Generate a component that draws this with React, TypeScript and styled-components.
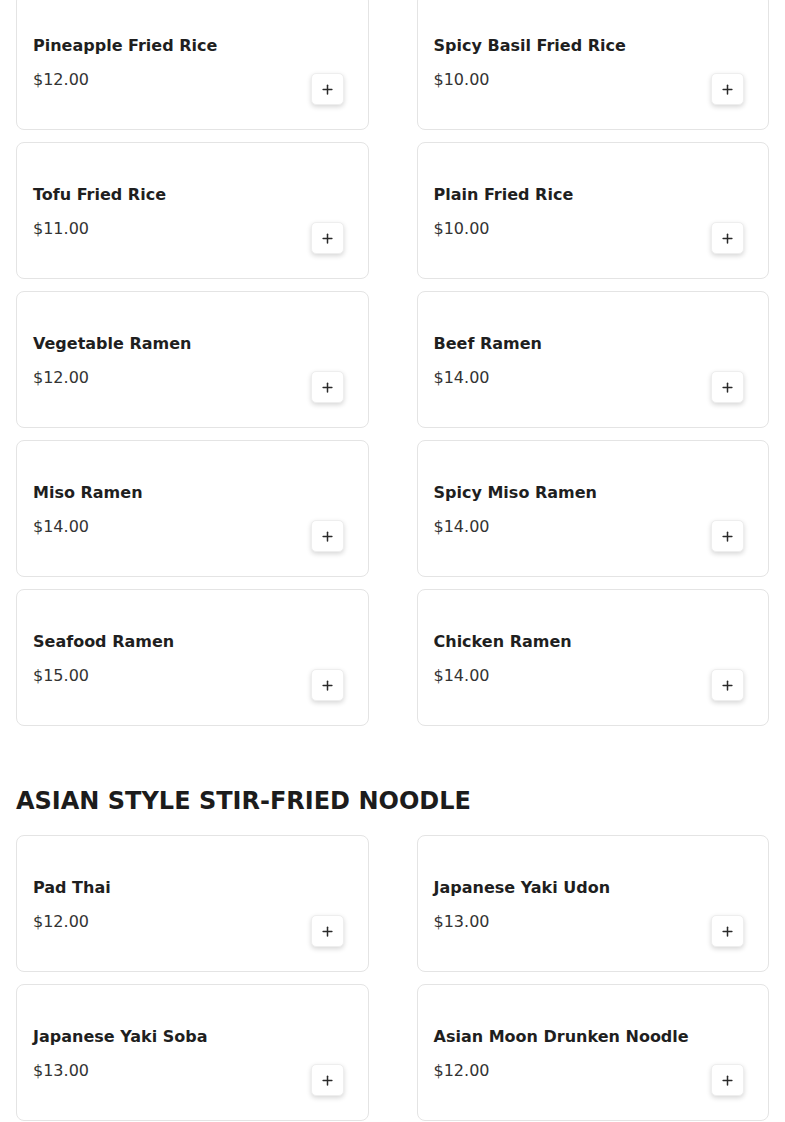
import React from 'react';
import styled, { createGlobalStyle } from 'styled-components';
import { Plus } from 'lucide-react';

const GlobalStyle = createGlobalStyle`
  body {
    margin: 0;
    background: #ffffff;
    font-family: "DejaVu Sans", "Liberation Sans", sans-serif;
    color: #1f1f1f;
  }
`;

const Page = styled.div`
  margin-top: -7px;
  padding: 0 16px;
  display: flex;
  flex-direction: column;
  gap: 59px;
`;

const Section = styled.section`
  display: flex;
  flex-direction: column;
`;

const SectionTitle = styled.h2`
  margin: 0 0 18px;
  font-size: 24px;
  line-height: 32px;
  font-weight: 700;
  color: #1c1c1c;
`;

const Grid = styled.div`
  display: grid;
  grid-template-columns: 1fr 1fr;
  column-gap: 48px;
  row-gap: 12px;
`;

const Card = styled.div`
  box-sizing: border-box;
  height: 137px;
  border: 1px solid #e4e4e4;
  border-radius: 8px;
  background: #fff;
  padding: 40px 24px 24px 16px;
  display: flex;
  justify-content: space-between;
`;

const Info = styled.div`
  display: flex;
  flex-direction: column;
  gap: 10px;
`;

const Name = styled.div`
  font-size: 16px;
  line-height: 24px;
  font-weight: 700;
  color: #1f1f1f;
`;

const Price = styled.div`
  font-size: 16px;
  line-height: 24px;
  color: #333;
`;

const AddButton = styled.button`
  align-self: flex-end;
  box-sizing: border-box;
  width: 33px;
  height: 32px;
  padding: 0;
  border: 1px solid #eeeeee;
  border-radius: 5px;
  background: #fff;
  box-shadow: 0 2px 5px rgba(0, 0, 0, 0.16);
  display: flex;
  align-items: center;
  justify-content: center;
  color: #2a2a2a;
  cursor: pointer;
`;

interface Item {
  name: string;
  price: string;
}

const riceAndRamen: Item[] = [
  { name: 'Pineapple Fried Rice', price: '$12.00' },
  { name: 'Spicy Basil Fried Rice', price: '$10.00' },
  { name: 'Tofu Fried Rice', price: '$11.00' },
  { name: 'Plain Fried Rice', price: '$10.00' },
  { name: 'Vegetable Ramen', price: '$12.00' },
  { name: 'Beef Ramen', price: '$14.00' },
  { name: 'Miso Ramen', price: '$14.00' },
  { name: 'Spicy Miso Ramen', price: '$14.00' },
  { name: 'Seafood Ramen', price: '$15.00' },
  { name: 'Chicken Ramen', price: '$14.00' },
];

const noodles: Item[] = [
  { name: 'Pad Thai', price: '$12.00' },
  { name: 'Japanese Yaki Udon', price: '$13.00' },
  { name: 'Japanese Yaki Soba', price: '$13.00' },
  { name: 'Asian Moon Drunken Noodle', price: '$12.00' },
];

const MenuCard = ({ name, price }: Item) => (
  <Card>
    <Info>
      <Name>{name}</Name>
      <Price>{price}</Price>
    </Info>
    <AddButton aria-label={`Add ${name}`}>
      <Plus size={15} strokeWidth={2.4} />
    </AddButton>
  </Card>
);

export default function App() {
  return (
    <>
      <GlobalStyle />
      <Page>
        <Section>
          <Grid>
            {riceAndRamen.map((item) => (
              <MenuCard key={item.name} {...item} />
            ))}
          </Grid>
        </Section>
        <Section>
          <SectionTitle>ASIAN STYLE STIR-FRIED NOODLE</SectionTitle>
          <Grid>
            {noodles.map((item) => (
              <MenuCard key={item.name} {...item} />
            ))}
          </Grid>
        </Section>
      </Page>
    </>
  );
}
